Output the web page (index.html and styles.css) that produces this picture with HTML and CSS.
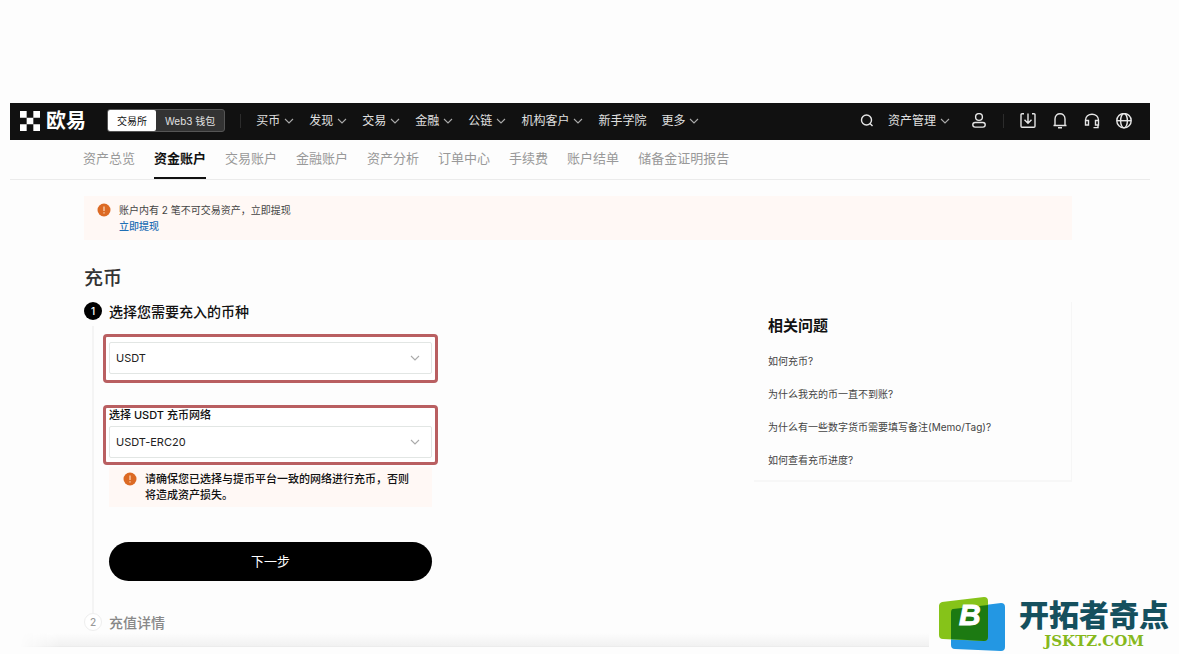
FILE: index.html
```html
<!DOCTYPE html>
<html lang="zh-CN">
<head>
    <meta charset="UTF-8">
    <meta name="viewport" content="width=device-width, initial-scale=1.0">
    <title>充币 - 欧易</title>
    <link rel="stylesheet" href="styles.css">
</head>
<body>

<!-- shared icons -->
<svg class="sprite" aria-hidden="true">
    <symbol id="chevron" viewBox="0 0 10 10">
        <path d="M1 3 L5 7 L9 3" fill="none" stroke="currentColor" stroke-width="1.1"/>
    </symbol>
    <symbol id="warning" viewBox="0 0 14 14">
        <circle cx="7" cy="7" r="6.5" fill="#dc6a24"/>
        <path d="M7 3.5 V8 M7 9.3 V10.6" stroke="#f9d3b4" stroke-width="1.3"/>
    </symbol>
</svg>

<div class="page">
    <header class="topbar">
        <a class="logo" href="#">
            <svg width="20" height="20" viewBox="0 0 21 21" fill="#fff">
                <path d="M0 0h7v7H0zM14 0h7v7h-7zM7 7h7v7H7zM0 14h7v7H0zM14 14h7v7h-7z"/>
            </svg>
            <span>欧易</span>
        </a>
        <div class="switch">
            <button class="on" type="button">交易所</button>
            <button type="button">Web3 钱包</button>
        </div>
        <span class="divider"></span>
        <nav class="menu">
            <a href="#">买币<svg class="arrow"><use href="#chevron"/></svg></a>
            <a href="#">发现<svg class="arrow"><use href="#chevron"/></svg></a>
            <a href="#">交易<svg class="arrow"><use href="#chevron"/></svg></a>
            <a href="#">金融<svg class="arrow"><use href="#chevron"/></svg></a>
            <a href="#">公链<svg class="arrow"><use href="#chevron"/></svg></a>
            <a href="#">机构客户<svg class="arrow"><use href="#chevron"/></svg></a>
            <a href="#">新手学院</a>
            <a href="#">更多<svg class="arrow"><use href="#chevron"/></svg></a>
        </nav>
        <div class="tools">
            <button type="button" aria-label="搜索">
                <svg width="14" height="14" viewBox="0 0 14 14"><circle cx="6.5" cy="6" r="5"/><path d="M10 9.5 L12.5 12"/></svg>
            </button>
            <a class="assets" href="#">资产管理<svg class="arrow"><use href="#chevron"/></svg></a>
            <button type="button" aria-label="用户">
                <svg width="16" height="16" viewBox="0 0 16 16"><circle cx="8" cy="4" r="3.4"/><rect x="1.8" y="9.5" width="12.4" height="4.6" rx="2.3"/></svg>
            </button>
            <span class="divider"></span>
            <button type="button" aria-label="下载">
                <svg width="16" height="16" viewBox="0 0 16 16"><path d="M4 0.8 H2 Q1 0.8 1 1.8 V13.2 Q1 14.2 2 14.2 H14 Q15 14.2 15 13.2 V1.8 Q15 0.8 14 0.8 H12 M8 0.5 V10 M4.5 6.8 L8 10.3 L11.5 6.8"/></svg>
            </button>
            <button type="button" aria-label="通知">
                <svg width="16" height="16" viewBox="0 0 16 16"><path d="M1.5 12.5 H14.5 M3 12.5 V6 C3 2.5 5.5 0.8 8 0.8 S13 2.5 13 6 V12.5 M6 14.8 H10"/></svg>
            </button>
            <button type="button" aria-label="客服">
                <svg width="16" height="16" viewBox="0 0 16 16"><path d="M1.5 8 V7 C1.5 3.5 4.5 1.2 8 1.2 S14.5 3.5 14.5 7 V8 M1.5 7.5 H4.5 V12 H1.5 Z M11.5 7.5 H14.5 V12 H11.5 Z M14 12 V14.6 H9.5"/></svg>
            </button>
            <button type="button" aria-label="语言">
                <svg width="16" height="16" viewBox="0 0 16 16"><circle cx="8" cy="7.7" r="7.2"/><ellipse cx="8" cy="7.7" rx="3.4" ry="7.2"/><path d="M1 7.7 H15"/></svg>
            </button>
        </div>
    </header>

    <nav class="tabs">
        <a href="#">资产总览</a>
        <a class="active" href="#">资金账户</a>
        <a href="#">交易账户</a>
        <a href="#">金融账户</a>
        <a href="#">资产分析</a>
        <a href="#">订单中心</a>
        <a href="#">手续费</a>
        <a href="#">账户结单</a>
        <a href="#">储备金证明报告</a>
    </nav>

    <main class="content">
        <div class="notice">
            <svg class="warn"><use href="#warning"/></svg>
            <div>
                <p>账户内有 2 笔不可交易资产，立即提现</p>
                <a href="#">立即提现</a>
            </div>
        </div>

        <h1>充币</h1>

        <div class="columns">
            <form class="steps">
                <section class="step">
                    <div class="rail"><span class="num">1</span></div>
                    <div class="body">
                        <h2><label for="coin">选择您需要充入的币种</label></h2>
                        <div class="marked coin">
                            <div class="select">
                                <select id="coin"><option>USDT</option></select>
                                <svg class="arrow"><use href="#chevron"/></svg>
                            </div>
                        </div>
                        <div class="marked network">
                            <label for="network">选择 USDT 充币网络</label>
                            <div class="select">
                                <select id="network"><option>USDT-ERC20</option></select>
                                <svg class="arrow"><use href="#chevron"/></svg>
                            </div>
                        </div>
                        <div class="tip">
                            <svg class="warn"><use href="#warning"/></svg>
                            <p>请确保您已选择与提币平台一致的网络进行充币，否则将造成资产损失。</p>
                        </div>
                        <button class="next" type="button">下一步</button>
                    </div>
                </section>
                <section class="step pending">
                    <div class="rail"><span class="num">2</span></div>
                    <div class="body"><h2>充值详情</h2></div>
                </section>
            </form>

            <aside class="faq">
                <h2>相关问题</h2>
                <a href="#">如何充币?</a>
                <a href="#">为什么我充的币一直不到账?</a>
                <a href="#">为什么有一些数字货币需要填写备注(Memo/Tag)?</a>
                <a href="#">如何查看充币进度?</a>
            </aside>
        </div>
    </main>
    <div class="fade"></div>
</div>

<div class="watermark">
    <svg width="66" height="54" viewBox="0 0 66 54">
        <path d="M14 12 L62 6 Q66 6 66 10 V50 Q66 54 62 54 L16 52 Q12 52 12 48 V16 Q12 12 14 12Z" fill="#2397e3"/>
        <path d="M3 5 L45 0 Q49 0 49 4 V40 Q49 44 45 44 L4 42 Q0 42 0 38 V9 Q0 6 3 5Z" fill="#86c319"/>
        <path d="M14 12 L49 8 V40 Q49 44 45 44 L12 42 V16 Q12 12 14 12Z" fill="#1c7a12"/>
        <text x="20" y="28" class="mark">B</text>
    </svg>
    <div class="brand">
        <strong>开拓者奇点</strong>
        <span>JSKTZ.COM</span>
    </div>
</div>

</body>
</html>
```
FILE: styles.css
```css
* {
    box-sizing: border-box;
}

body {
    margin: 0;
    background-color: #fdfdfd;
    color: #111;
    font-family: Inter, "Noto Sans CJK SC", sans-serif;
    font-size: 10px;
    line-height: 16px;
}

h1, h2, p {
    margin: 0;
}

a {
    color: inherit;
    text-decoration: none;
}

button {
    padding: 0;
    border: 0;
    background: none;
    color: inherit;
    font: inherit;
    cursor: pointer;
}

.sprite {
    display: none;
}

.page {
    padding: 103px 29px 0 10px;
}

.arrow {
    width: 10px;
    height: 10px;
    margin-left: 4px;
}

.warn {
    flex: none;
    width: 14px;
    height: 14px;
}

/* top bar */
.topbar {
    display: flex;
    align-items: center;
    height: 37px;
    padding: 0 18px 2px 10px;
    background-color: #111;
    color: #e0e0e0;
    font-size: 12px;
    white-space: nowrap;
}

.logo {
    display: flex;
    align-items: center;
    gap: 6px;
    color: #fff;
    font-size: 20px;
    font-weight: bold;
}

.switch {
    display: flex;
    height: 23px;
    margin-left: 21px;
    border: 1px solid #555;
    border-radius: 3px;
    background-color: #333;
    font-size: 10px;
}

.switch button {
    padding: 0 9px;
}

.switch .on {
    border-radius: 2px;
    background-color: #fff;
    color: #111;
}

.divider {
    width: 1px;
    height: 14px;
    background-color: #2c2c2c;
}

.topbar > .divider {
    margin: 0 15px;
}

.topbar .arrow {
    color: #aaa;
}

.menu {
    display: flex;
    gap: 15px;
}

.menu a, .assets {
    display: flex;
    align-items: center;
}

.tools {
    display: flex;
    align-items: center;
    gap: 16px;
    margin-left: auto;
}

.tools button {
    display: flex;
}

.tools button svg {
    fill: none;
    stroke: #e6e6e6;
    stroke-width: 1.4;
}

.assets {
    margin: 0 5px 0 -2px;
}

/* account tabs */
.tabs {
    display: flex;
    gap: 19px;
    height: 40px;
    padding-left: 73px;
    border-bottom: 1px solid #ebebeb;
    color: #999;
    font-size: 13px;
    line-height: 37px;
    white-space: nowrap;
}

.tabs .active {
    border-bottom: 2px solid #111;
    color: #111;
    font-weight: bold;
}

.content {
    padding: 16px 78px 0 74px;
}

.notice {
    display: flex;
    gap: 8px;
    padding: 6px 13px;
    background-color: #fff8f5;
    color: #444;
}

.notice .warn {
    margin-top: 1px;
}

.notice a {
    display: block;
    color: #1f6fb5;
    font-weight: 500;
}

h1 {
    margin-top: 25px;
    color: #333;
    font-size: 19px;
    font-weight: 500;
    line-height: 28px;
}

.columns {
    display: flex;
    justify-content: space-between;
    align-items: flex-start;
    margin-top: 9px;
}

/* deposit steps */
.steps {
    width: 348px;
}

.step {
    display: flex;
    gap: 7px;
}

.step h2 {
    font-size: 14px;
    font-weight: 500;
    line-height: 20px;
}

.rail {
    display: flex;
    flex-direction: column;
    align-items: center;
    gap: 6px;
}

.rail::after {
    content: "";
    flex: 1;
    width: 2px;
    background-color: #f4f4f4;
}

.num {
    width: 18px;
    height: 18px;
    border-radius: 50%;
    background-color: #000;
    color: #fff;
    font-weight: 500;
    line-height: 18px;
    text-align: center;
}

.body {
    flex: 1;
    padding-bottom: 32px;
}

.pending .body {
    padding-bottom: 0;
}

.pending h2 {
    color: #888;
}

.pending .num {
    border: 1px solid #eee;
    background-color: #fff;
    color: #999;
    line-height: 16px;
}

.pending .rail::after {
    display: none;
}

.marked {
    margin: 0 -6px;
    border: 3px solid #b95f61;
    border-radius: 4px;
    background-color: #fff;
}

.coin {
    margin-top: 12px;
    padding: 5px 3px 6px;
}

.network {
    margin-top: 22px;
    padding: 0 3px 4px;
    font-size: 11px;
    font-weight: 500;
}

.network label {
    display: block;
    padding-bottom: 4px;
    line-height: 14px;
}

.select {
    position: relative;
}

.select select {
    display: block;
    width: 100%;
    height: 32px;
    padding: 0 6px;
    border: 1px solid #e2e6e4;
    border-radius: 2px;
    appearance: none;
    background-color: #fff;
    color: #222;
    font-family: inherit;
    font-size: 11px;
}

.select .arrow {
    position: absolute;
    top: 11px;
    right: 12px;
    color: #aaa;
    pointer-events: none;
}

.tip {
    display: flex;
    gap: 8px;
    margin-top: 2px;
    padding: 4px 14px;
    background-color: #fff8f5;
    font-size: 11px;
    font-weight: 500;
}

.tip .warn {
    margin-top: 1px;
}

.next {
    width: 100%;
    height: 39px;
    margin-top: 35px;
    padding-bottom: 2px;
    border-radius: 20px;
    background-color: #000;
    color: #fff;
    font-size: 13px;
}

/* related questions */
.faq {
    width: 318px;
    padding: 14px 14px 12px;
    border-right: 1px solid #f6f6f6;
    border-bottom: 2px solid #f7f7f7;
    color: #444;
}

.faq h2 {
    color: #111;
    font-size: 15px;
    font-weight: bold;
    line-height: 20px;
}

.faq a {
    display: block;
    margin-top: 17px;
}

.fade {
    height: 14px;
    margin-left: 10px;
    border-bottom: 1px solid #ececec;
    background: linear-gradient(#fdfdfd, #f1f1f1);
    mask-image: linear-gradient(to right, transparent, #000 40px);
}

/* site mark in the corner */
.watermark {
    position: absolute;
    right: 0;
    bottom: 0;
    display: flex;
    gap: 14px;
    padding: 4px 10px 3px;
    background-color: #fdfdfd;
}

.watermark svg {
    overflow: visible;
}

.mark {
    fill: #fff;
    font-family: "Liberation Sans", sans-serif;
    font-size: 30px;
    font-style: italic;
    font-weight: bold;
    stroke: #fff;
    stroke-width: 1;
}

.brand {
    display: flex;
    flex-direction: column;
    align-items: center;
    color: #15505e;
}

.brand strong {
    font-size: 30px;
    font-weight: 900;
    line-height: 36px;
}

.brand span {
    color: #86b81c;
    font-family: "DejaVu Serif", serif;
    font-size: 15px;
    font-weight: bold;
}
```
